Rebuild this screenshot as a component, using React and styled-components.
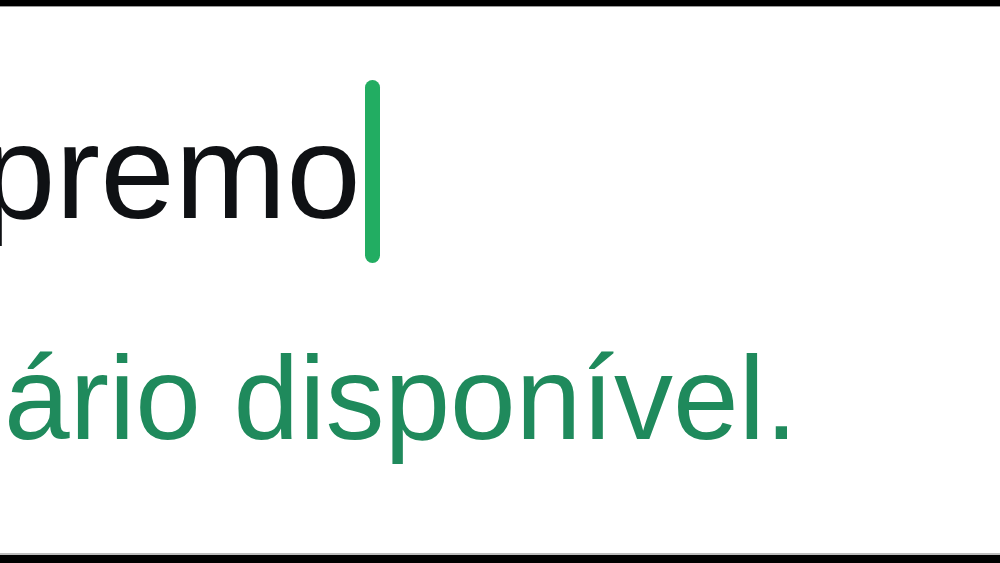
import React from "react";
import styled, { createGlobalStyle } from "styled-components";

const GlobalStyle = createGlobalStyle`
  html, body {
    margin: 0;
    padding: 0;
    background: #ffffff;
  }
  body {
    font-family: "Liberation Sans", Arial, sans-serif;
  }
`;

const Screen = styled.div`
  width: 1000px;
  height: 563px;
  display: flex;
  flex-direction: column;
  overflow: hidden;
  background: #ffffff;
`;

const Bar = styled.div`
  flex: none;
  height: ${(p) => p.$height}px;
  background: #000000;
  ${(p) => (p.$top ? "border-bottom: 1px solid #9a9a9a;" : "border-top: 2px solid #bdbdbd;")}
`;

const Field = styled.div`
  flex: 1;
  display: flex;
  flex-direction: column;
  padding-top: 73px;
  gap: 76px;
`;

const InputRow = styled.div`
  display: flex;
  align-items: center;
  gap: 4px;
  margin-left: -19px;
`;

const Value = styled.span`
  font-size: 134px;
  line-height: 1;
  color: #0f1114;
`;

const Caret = styled.span`
  width: 15px;
  height: 183px;
  border-radius: 8px;
  background: #22ad62;
`;

const Hint = styled.p`
  margin: 0 0 0 4px;
  font-size: 118px;
  line-height: 1;
  color: #1f8a5c;
  white-space: nowrap;
`;

export default function App() {
  return (
    <>
      <GlobalStyle />
      <Screen>
        <Bar $top $height={6} />
        <Field>
          <InputRow>
            <Value>premo</Value>
            <Caret />
          </InputRow>
          <Hint>ário disponível.</Hint>
        </Field>
        <Bar $height={8} />
      </Screen>
    </>
  );
}
